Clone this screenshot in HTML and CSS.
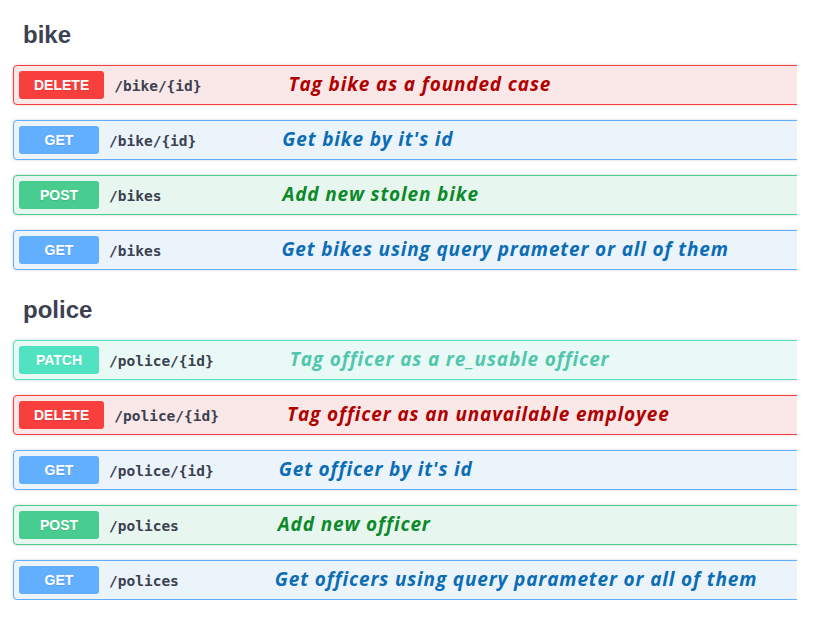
FILE: index.html
```html
<!DOCTYPE html>
<html>
<head>
<meta charset="utf-8">
<link rel="stylesheet" href="styles.css">
</head>
<body>
<div class="page">
  <section class="tag">
    <h3 class="tag-title">bike</h3>
    <div class="ops">
      <div class="op op-delete">
        <span class="method">DELETE</span>
        <span class="path">/bike/{id}</span>
        <span class="desc off-1">Tag bike as a founded case</span>
      </div>
      <div class="op op-get">
        <span class="method">GET</span>
        <span class="path">/bike/{id}</span>
        <span class="desc off-2">Get bike by it's id</span>
      </div>
      <div class="op op-post">
        <span class="method">POST</span>
        <span class="path">/bikes</span>
        <span class="desc off-3">Add new stolen bike</span>
      </div>
      <div class="op op-get">
        <span class="method">GET</span>
        <span class="path">/bikes</span>
        <span class="desc off-4">Get bikes using query prameter or all of them</span>
      </div>
    </div>
  </section>
  <section class="tag tag-police">
    <h3 class="tag-title">police</h3>
    <div class="ops">
      <div class="op op-patch">
        <span class="method">PATCH</span>
        <span class="path">/police/{id}</span>
        <span class="desc off-5">Tag officer as a re_usable officer</span>
      </div>
      <div class="op op-delete">
        <span class="method">DELETE</span>
        <span class="path">/police/{id}</span>
        <span class="desc off-6">Tag officer as an unavailable employee</span>
      </div>
      <div class="op op-get">
        <span class="method">GET</span>
        <span class="path">/police/{id}</span>
        <span class="desc off-7">Get officer by it's id</span>
      </div>
      <div class="op op-post">
        <span class="method">POST</span>
        <span class="path">/polices</span>
        <span class="desc off-8">Add new officer</span>
      </div>
      <div class="op op-get">
        <span class="method">GET</span>
        <span class="path">/polices</span>
        <span class="desc off-9">Get officers using query parameter or all of them</span>
      </div>
    </div>
  </section>
</div>
</body>
</html>
```
FILE: styles.css
```css
html, body {
  margin: 0;
  padding: 0;
  background: #ffffff;
}

.page {
  width: 784px;
  padding: 20px 0 0 13px;
  overflow: hidden;
  font-family: "Liberation Sans", Arial, sans-serif;
}

.tag {
  display: flex;
  flex-direction: column;
}

.tag-police {
  margin-top: 25px;
}

.tag-title {
  margin: 0 0 15px 10px;
  font-size: 24px;
  line-height: 30px;
  font-weight: 700;
  color: #3b4151;
}

.ops {
  display: flex;
  flex-direction: column;
  gap: 15px;
}

.op {
  display: flex;
  align-items: center;
  box-sizing: border-box;
  width: 800px;
  height: 40px;
  padding: 0 5px;
  border: 1px solid;
  border-radius: 4px;
  box-shadow: 0 0 3px rgba(0, 0, 0, 0.19);
}

.method {
  box-sizing: border-box;
  min-width: 80px;
  height: 28px;
  padding: 0 15px;
  border-radius: 3px;
  font-size: 14px;
  line-height: 28px;
  font-weight: 700;
  color: #ffffff;
  text-align: center;
  text-shadow: 0 1px 0 rgba(0, 0, 0, 0.1);
}

.path {
  padding: 0 10px;
  margin-top: 2px;
  font-family: "DejaVu Sans Mono", monospace;
  font-size: 14.5px;
  font-weight: 700;
  color: #3b4151;
}

.desc {
  font-family: "Open Sans", Lato, sans-serif;
  font-style: italic;
  font-weight: 700;
  font-size: 19px;
  letter-spacing: 0.85px;
  line-height: 24px;
  margin-top: -3px;
  white-space: nowrap;
}

.op-delete { background: #fae7e7; border-color: #f93e3e; }
.op-delete .method { background: #f93e3e; }
.op-delete .desc { color: #b00000; }

.op-get { background: #ebf3fb; border-color: #61affe; }
.op-get .method { background: #61affe; }
.op-get .desc { color: #0b6db5; }

.op-post { background: #e8f6f0; border-color: #49cc90; }
.op-post .method { background: #49cc90; }
.op-post .desc { color: #0c8a2a; }

.op-patch { background: #e9faf6; border-color: #50e3c2; }
.op-patch .method { background: #50e3c2; }
.op-patch .desc { color: #52c6ad; }

.off-1 { margin-left: 77px; }
.off-2 { margin-left: 76px; }
.off-3 { margin-left: 111px; }
.off-4 { margin-left: 110px; }
.off-5 { margin-left: 66px; }
.off-6 { margin-left: 58px; }
.off-7 { margin-left: 55px; }
.off-8 { margin-left: 89px; }
.off-9 { margin-left: 86px; }
```
